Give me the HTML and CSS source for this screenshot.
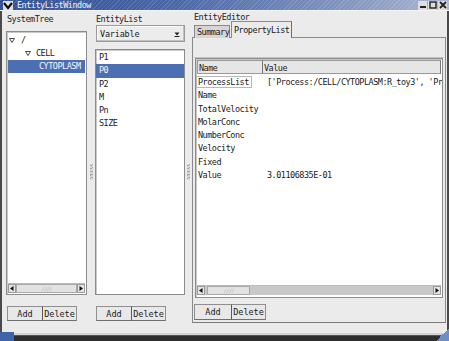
FILE: index.html
```html
<!DOCTYPE html>
<html>
<head>
<meta charset="utf-8">
<link rel="stylesheet" href="styles.css">
</head>
<body>
<div class="screen">
  <div class="window">
    <div class="titlebar">
      <svg class="ticon" width="10" height="9" viewBox="0 0 10 9"><path d="M1 2 L5 7 L9 2" fill="none" stroke="#111" stroke-width="2.2"/></svg>
      <span class="title">EntityListWindow</span>
      <span class="tbtns">
        <span class="tbtn"><svg width="8" height="8" viewBox="0 0 8 8"><rect x="1" y="5" width="6" height="2" fill="#222"/></svg></span>
        <span class="tbtn"><svg width="8" height="8" viewBox="0 0 8 8"><rect x="1" y="1" width="6" height="6" fill="none" stroke="#222" stroke-width="1.4"/></svg></span>
        <span class="tbtn"><svg width="8" height="8" viewBox="0 0 8 8"><path d="M1 1 L7 7 M7 1 L1 7" stroke="#222" stroke-width="1.8"/></svg></span>
      </span>
    </div>
    <div class="body">
      <div class="col col-tree">
        <div class="label">SystemTree</div>
        <div class="box tree">
          <div class="items">
            <div class="trow l0"><svg class="tri" width="6" height="5" viewBox="0 0 6 5"><path d="M0.5 0.5 H5.5 L3 4.5 Z" fill="none" stroke="#333" stroke-width="0.9"/></svg><span>/</span></div>
            <div class="trow l1"><svg class="tri" width="6" height="5" viewBox="0 0 6 5"><path d="M0.5 0.5 H5.5 L3 4.5 Z" fill="none" stroke="#333" stroke-width="0.9"/></svg><span>CELL</span></div>
            <div class="trow l2 sel"><span>CYTOPLASM</span></div>
          </div>
          <div class="hscroll">
            <span class="arrow"><svg width="4" height="5" viewBox="0 0 4 5"><path d="M3.5 0 V5 L0 2.5 Z" fill="#111"/></svg></span>
            <span class="thumb full"><span class="grip">////</span></span>
            <span class="arrow"><svg width="4" height="5" viewBox="0 0 4 5"><path d="M0.5 0 V5 L4 2.5 Z" fill="#111"/></svg></span>
          </div>
        </div>
        <div class="btns"><span class="btn add">Add</span><span class="btn del">Delete</span></div>
      </div>
      <div class="splitter"><span class="vgrip"></span></div>
      <div class="col col-list">
        <div class="label">EntityList</div>
        <div class="combo"><span>Variable</span><svg width="6" height="6" viewBox="0 0 6 6"><path d="M0.5 1.5 H5.5 L3 4.5 Z" fill="#222"/><rect x="0.5" y="5" width="5" height="1" fill="#222"/></svg></div>
        <div class="box list">
          <div class="lrow">P1</div>
          <div class="lrow sel">P0</div>
          <div class="lrow">P2</div>
          <div class="lrow">M</div>
          <div class="lrow">Pn</div>
          <div class="lrow">SIZE</div>
        </div>
        <div class="btns"><span class="btn add">Add</span><span class="btn del">Delete</span></div>
      </div>
      <div class="splitter s2"><span class="vgrip"></span></div>
      <div class="col col-editor">
        <div class="label elabel">EntityEditor</div>
        <div class="tabs">
          <span class="tab">Summary</span>
          <span class="tab active">PropertyList</span>
        </div>
        <div class="panel">
          <div class="panel-top"></div>
          <div class="box props">
            <div class="phead"><span class="c1">Name</span><span class="c2">Value</span></div>
            <div class="prows">
              <div class="prow"><span class="c1"><span class="focus">ProcessList</span></span><span class="c2">['Process:/CELL/CYTOPLASM:R_toy3', 'Pr</span></div>
              <div class="prow"><span class="c1">Name</span><span class="c2"></span></div>
              <div class="prow"><span class="c1">TotalVelocity</span><span class="c2"></span></div>
              <div class="prow"><span class="c1">MolarConc</span><span class="c2"></span></div>
              <div class="prow"><span class="c1">NumberConc</span><span class="c2"></span></div>
              <div class="prow"><span class="c1">Velocity</span><span class="c2"></span></div>
              <div class="prow"><span class="c1">Fixed</span><span class="c2"></span></div>
              <div class="prow"><span class="c1">Value</span><span class="c2">3.01106835E-01</span></div>
            </div>
            <div class="hscroll">
              <span class="arrow"><svg width="4" height="5" viewBox="0 0 4 5"><path d="M3.5 0 V5 L0 2.5 Z" fill="#111"/></svg></span>
              <span class="trough"><span class="thumb small"><span class="grip">////</span></span></span>
              <span class="arrow"><svg width="4" height="5" viewBox="0 0 4 5"><path d="M0.5 0 V5 L4 2.5 Z" fill="#111"/></svg></span>
            </div>
          </div>
          <div class="btns pbtns"><span class="btn add">Add</span><span class="btn del">Delete</span></div>
        </div>
      </div>
    </div>
    <div class="bottomedge"></div>
  </div>
  <div class="desk"><span class="deskblue"></span><span class="resize"></span></div>
</div>
</body>
</html>
```
FILE: styles.css
```css
html, body {
  margin: 0;
  padding: 0;
  background: #3a3a3a;
}
.screen {
  width: 449px;
  height: 341px;
  position: relative;
  overflow: hidden;
}
.window {
  width: 449px;
  height: 336px;
  display: flex;
  flex-direction: column;
  background: #ebebeb;
  box-sizing: border-box;
  border-left: 2px solid #4a4a4a;
  border-right: 2px solid #4a4a4a;
  font-family: "DejaVu Sans Mono", "Liberation Mono", monospace;
  font-size: 8.5px;
  letter-spacing: -0.5px;
  color: #1a1a1a;
}
.titlebar {
  height: 10px;
  flex: none;
  display: flex;
  align-items: center;
  margin: 0 -2px;
  padding: 0 2px;
  background:
    repeating-linear-gradient(135deg, rgba(255,255,255,0.12) 0 1px, rgba(255,255,255,0) 1px 3px),
    linear-gradient(90deg, #2f4f91 0%, #4a68a8 40%, #7f92bd 75%, #aab6d2 100%);
  border-bottom: 1px solid #f4f4f4;
}
.ticon {
  margin-left: 1px;
  background: #e0e0e0;
  flex: none;
}
.title {
  margin-left: 4px;
  color: #eef0f6;
  line-height: 10px;
}
.tbtns {
  margin-left: auto;
  display: flex;
  gap: 1px;
}
.tbtn {
  width: 9px;
  height: 9px;
  background: #dedede;
  display: flex;
  align-items: center;
  justify-content: center;
}
.body {
  flex: 1;
  display: flex;
  padding-left: 4px;
  padding-right: 1px;
}
.col {
  display: flex;
  flex-direction: column;
}
.col-tree { width: 81px; }
.col-list { width: 90px; }
.col-editor { width: 254px; }
.label {
  height: 16px;
  line-height: 16px;
  color: #222;
  padding-left: 1px;
}
.box {
  background: #fff;
  border: 1px solid #8c8c8c;
  box-shadow: inset 1px 1px 0 #c8c8c8;
}
.tree {
  margin-top: 4px;
  flex: 1;
  display: flex;
  flex-direction: column;
}
.tree .items {
  flex: 1;
  padding-top: 2px;
}
.trow {
  height: 13px;
  line-height: 13px;
  display: flex;
  align-items: center;
  gap: 6px;
}
.trow.l0 { padding-left: 2px; }
.trow.l1 { padding-left: 18px; gap: 5px; }
.trow.l2 { padding-left: 31px; margin: 0 1px; }
.sel {
  background: #4c6fb3;
  color: #f4f6fb;
}
.hscroll {
  height: 9px;
  display: flex;
  background: #d2d2d2;
  border-top: 1px solid #bcbcbc;
  margin: 0 1px 1px;
}
.arrow {
  width: 8px;
  flex: none;
  background: #e4e4e4;
  border: 1px solid #9a9a9a;
  box-sizing: border-box;
  display: flex;
  align-items: center;
  justify-content: center;
}
.thumb {
  background: #e2e2e2;
  border: 1px solid #a8a8a8;
  box-sizing: border-box;
  display: flex;
  align-items: center;
  justify-content: center;
}
.thumb.full { flex: 1; }
.thumb.small { width: 43px; height: 100%; }
.trough {
  flex: 1;
  display: flex;
  background: #c9c9c9;
  padding-left: 2px;
}
.grip {
  font-size: 6px;
  color: #b8b8b8;
  letter-spacing: -1px;
  line-height: 7px;
}
.btns {
  display: flex;
  height: 15px;
  margin-top: 11px;
  margin-bottom: 12px;
  padding-left: 1px;
}
.btn {
  height: 15px;
  line-height: 14px;
  box-sizing: border-box;
  background: #e8e8e8;
  border: 1px solid #8f8f8f;
  border-bottom-color: #6f6f6f;
  text-align: center;
  letter-spacing: 0;
}
.btn.add { width: 35px; border-right: none; }
.btn.del { width: 35px; border-left: 1px solid #5a5a5a; }
.splitter {
  width: 8px;
  display: flex;
  align-items: center;
  justify-content: center;
  padding-bottom: 4px;
}
.splitter.s2 { width: 7px; }
.vgrip {
  width: 3px;
  height: 16px;
  background: repeating-linear-gradient(160deg, #d8d8d8 0 1px, #a5a5a5 1px 2px, #d8d8d8 2px 3px);
  margin-top: 4px;
}
.combo {
  height: 17px;
  margin-top: -2px;
  margin-left: 1px;
  display: flex;
  align-items: center;
  justify-content: space-between;
  padding: 0 4px 0 3px;
  background: #ececec;
  border: 1px solid #9a9a9a;
  box-shadow: inset -1px -1px 0 #c0c0c0, inset 1px 1px 0 #fafafa;
  box-sizing: border-box;
  letter-spacing: -0.2px;
}
.list {
  margin-top: 7px;
  flex: 1;
  padding-top: 1px;
}
.lrow {
  height: 13.3px;
  line-height: 13.3px;
  padding-left: 3px;
}
.elabel {
  height: 11px;
  line-height: 13px;
  padding-left: 2px;
}
.tabs {
  height: 16px;
  display: flex;
  align-items: flex-end;
  padding-left: 2px;
  margin-bottom: -1px;
  position: relative;
  z-index: 1;
}
.tab {
  height: 13px;
  line-height: 13px;
  padding: 0 2px;
  background: #d6d6d6;
  border: 1px solid #8a8a8a;
  border-bottom: none;
  width: 36px;
  box-sizing: border-box;
}
.tab.active {
  height: 17px;
  line-height: 16px;
  width: 61px;
  background: #ebebeb;
  margin-left: 1px;
  border-right-color: #6f6f6f;
}
.panel {
  flex: 1;
  display: flex;
  flex-direction: column;
  border: 1px solid #8a8a8a;
  border-bottom-color: #7a7a7a;
  padding: 0 2px;
  margin-bottom: 10px;
}
.panel-top {
  height: 19px;
  border-bottom: 1px solid #c4c4c4;
  box-shadow: 0 1px 0 #fafafa;
  margin: 0 -1px;
}
.props {
  flex: 1;
  display: flex;
  flex-direction: column;
  overflow: hidden;
}
.phead {
  display: flex;
  height: 14px;
  line-height: 14px;
  margin: 1px 1px 0;
}
.phead span {
  background: #e6e6e6;
  border: 1px solid #9a9a9a;
  border-right-color: #777;
  box-sizing: border-box;
  padding-left: 1px;
}
.c1 { width: 66px; flex: none; white-space: nowrap; }
.c2 { flex: 1; white-space: nowrap; overflow: hidden; }
.phead .c2 { border-left: none; }
.prows {
  flex: 1;
  padding-top: 2px;
}
.prow {
  display: flex;
  height: 13.3px;
  line-height: 13.3px;
  padding-left: 2px;
}
.prow .c1 { width: 67px; }
.focus {
  border: 1px solid #b8b8b8;
  padding: 0 2px 0 1px;
  margin-left: -2px;
}
.prow .c2 { padding-left: 2px; }
.props .hscroll { margin: 0 1px 2px; }
.pbtns {
  margin-top: 6px;
  margin-bottom: 3px;
  padding-left: 0;
  margin-left: -1px;
}
.pbtns .btn { height: 16px; }
.pbtns .btn.add { width: 37px; }
.bottomedge {
  height: 2px;
  margin: 0 -2px;
  background: #d4d4d4;
  border-bottom: 1px solid #555;
}
.desk {
  height: 5px;
  position: relative;
  background: #2e2e2e;
}
.deskblue {
  position: absolute;
  left: 0;
  bottom: 0;
  width: 14px;
  height: 9px;
  background: #3f64a8;
}
.resize {
  position: absolute;
  right: 0;
  bottom: 0;
  width: 14px;
  height: 12px;
  background: linear-gradient(135deg, transparent 50%, #6f8cc4 50%);
}
```
